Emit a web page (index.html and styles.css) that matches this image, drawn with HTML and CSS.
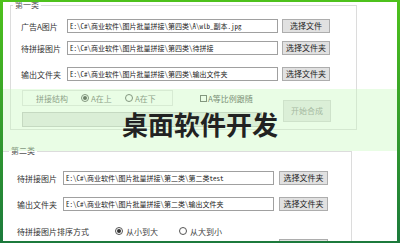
FILE: index.html
```html
<!DOCTYPE html>
<html lang="zh-CN">
<head>
  <meta charset="UTF-8" />
  <title>图片批量拼接</title>
  <link rel="stylesheet" href="styles.css">
</head>
<body>

  <div class="frame">
    <fieldset class="group group-one">
      <legend>第一类</legend>
      <div class="rows">
        <div class="row r1">
          <span class="label">广告A图片</span>
          <input class="path" value="E:\C#\商业软件\图片批量拼接\第四类\A\wlb_副本.jpg" readonly>
          <button class="btn">选择文件</button>
        </div>
        <div class="row r2">
          <span class="label">待拼接图片</span>
          <input class="path" value="E:\C#\商业软件\图片批量拼接\第四类\待拼接" readonly>
          <button class="btn">选择文件夹</button>
        </div>
        <div class="row r3">
          <span class="label">输出文件夹</span>
          <input class="path" value="E:\C#\商业软件\图片批量拼接\第四类\输出文件夹" readonly>
          <button class="btn">选择文件夹</button>
        </div>
        <div class="compose">
          <div class="compose-left">
            <div class="compose-top">
              <div class="radio-box">
                <span class="caption">拼接结构</span>
                <label class="radio on"><i></i>A在上</label>
                <label class="radio"><i></i>A在下</label>
              </div>
              <label class="check"><i></i>A等比例跟随</label>
            </div>
            <div class="progress"></div>
          </div>
          <button class="btn btn-start">开始合成</button>
        </div>
      </div>
    </fieldset>

    <fieldset class="group group-two">
      <legend>第二类</legend>
      <div class="rows">
        <div class="row s1">
          <span class="label">待拼接图片</span>
          <input class="path" value="E:\C#\商业软件\图片批量拼接\第二类\第二类test" readonly>
          <button class="btn">选择文件夹</button>
        </div>
        <div class="row s2">
          <span class="label">输出文件夹</span>
          <input class="path" value="E:\C#\商业软件\图片批量拼接\第二类\输出文件夹" readonly>
          <button class="btn">选择文件夹</button>
        </div>
        <div class="row s3">
          <span class="label label-wide">待拼接图片排序方式</span>
          <label class="radio on"><i></i>从小到大</label>
          <label class="radio"><i></i>从大到小</label>
        </div>
        <div class="row s4">
          <button class="btn btn-run"></button>
        </div>
      </div>
    </fieldset>

    <div class="banner">桌面软件开发</div>
  </div>

</body>
</html>
```

FILE: styles.css
```css
* {
  margin: 0;
  padding: 0;
  box-sizing: border-box;
  font-family: "Noto Sans CJK SC", sans-serif;
}

body {
  background: #fff;
}

.frame {
  position: relative;
  width: 400px;
  height: 243px;
  overflow: hidden;
  background: #fff;
  border-style: solid;
  border-width: 2px 3px 2px 3px;
  border-image: linear-gradient(#4ec21c, #1c7a3c) 1;
}

/* group boxes */
.group {
  border: 1px solid #dcdcdc;
  padding: 0 0 2px 0;
}

.group legend {
  font-size: 8px;
  line-height: 10px;
  color: #555;
  padding: 0 2px;
}

.group-one {
  width: 347px;
  margin: -2px 0 0 7px;
}

.group-one legend {
  margin-left: 2px;
}

.group-one .rows {
  padding-left: 10px;
}

.group-two {
  width: 350px;
  margin: 16px 0 0 -1px;
}

.group-two legend {
  margin-left: 6px;
}

.group-two .rows {
  padding-left: 14px;
}

.row {
  display: flex;
  align-items: center;
  height: 16px;
}

.r1 { margin-top: 8px; }
.r2 { margin-top: 6px; }
.r3 { margin-top: 10px; }
.s1 { margin-top: 14px; }
.s2 { margin-top: 10px; }
.s3 { margin-top: 11px; }

.label {
  width: 46px;
  font-size: 8px;
  color: #333;
  white-space: nowrap;
}

.label-wide {
  width: 98px;
}

.path {
  width: 211px;
  height: 14px;
  border: 1px solid #a0a0a0;
  background: #fff;
  padding: 0 2px;
  font-family: "Noto Sans Mono CJK SC", "Liberation Mono", "Noto Sans CJK SC", monospace;
  font-size: 7px;
  color: #222;
  outline: none;
}

.btn {
  width: 48px;
  height: 14px;
  margin-left: 4px;
  border: 1px solid #adadad;
  background: #e1e1e1;
  font-size: 8px;
  color: #222;
  line-height: 12px;
}

.group-two .btn {
  width: 49px;
  margin-left: 5px;
}

.group-two .s4 .btn {
  margin-left: 262px;
  height: 16px;
}

/* compose area */
.compose {
  display: flex;
  align-items: flex-start;
  margin-top: 8px;
}

.compose-left {
  width: 261px;
}

.compose-top {
  display: flex;
  align-items: center;
  height: 16px;
}

.radio-box {
  display: flex;
  align-items: center;
  width: 151px;
  height: 16px;
  margin-left: 1px;
  padding-left: 13px;
  border: 1px solid #e2e2e2;
}

.caption {
  width: 45px;
  font-size: 8px;
  color: #666;
}

.radio,
.check {
  display: flex;
  align-items: center;
  font-size: 8px;
  color: #444;
  white-space: nowrap;
}

.radio i {
  display: flex;
  align-items: center;
  justify-content: center;
  width: 8px;
  height: 8px;
  margin-right: 2px;
  border: 1px solid #555;
  border-radius: 50%;
  background: #fff;
}

.radio.on i::after {
  content: "";
  width: 4px;
  height: 4px;
  border-radius: 50%;
  background: #333;
}

.radio-box .radio + .radio {
  margin-left: 13px;
}

.radio-box .radio {
  color: #666;
}

.s3 .radio i {
  margin-right: 3px;
}

.s3 .radio + .radio {
  margin-left: 21px;
}

.check {
  margin-left: 27px;
}

.check i {
  width: 7px;
  height: 7px;
  margin-right: 1px;
  border: 1px solid #555;
  background: #fff;
}

.progress {
  width: 240px;
  height: 15px;
  margin: 6px 0 0 1px;
  border: 1px solid #c4c4c4;
  background: #e6e6e6;
}

.btn-start {
  width: 48px;
  height: 22px;
  margin: 10px 0 0 1px;
  border-color: #d2d2d2;
  background: #e8e8e8;
  color: #8c8c8c;
}

/* overlay band with title */
.banner {
  position: absolute;
  left: 0;
  right: 0;
  top: 87px;
  height: 62px;
  display: flex;
  align-items: center;
  justify-content: center;
  padding-top: 7px;
  background: rgba(200, 250, 190, 0.4);
  font-size: 26px;
  line-height: 26px;
  font-weight: 700;
  color: #222;
}
```
